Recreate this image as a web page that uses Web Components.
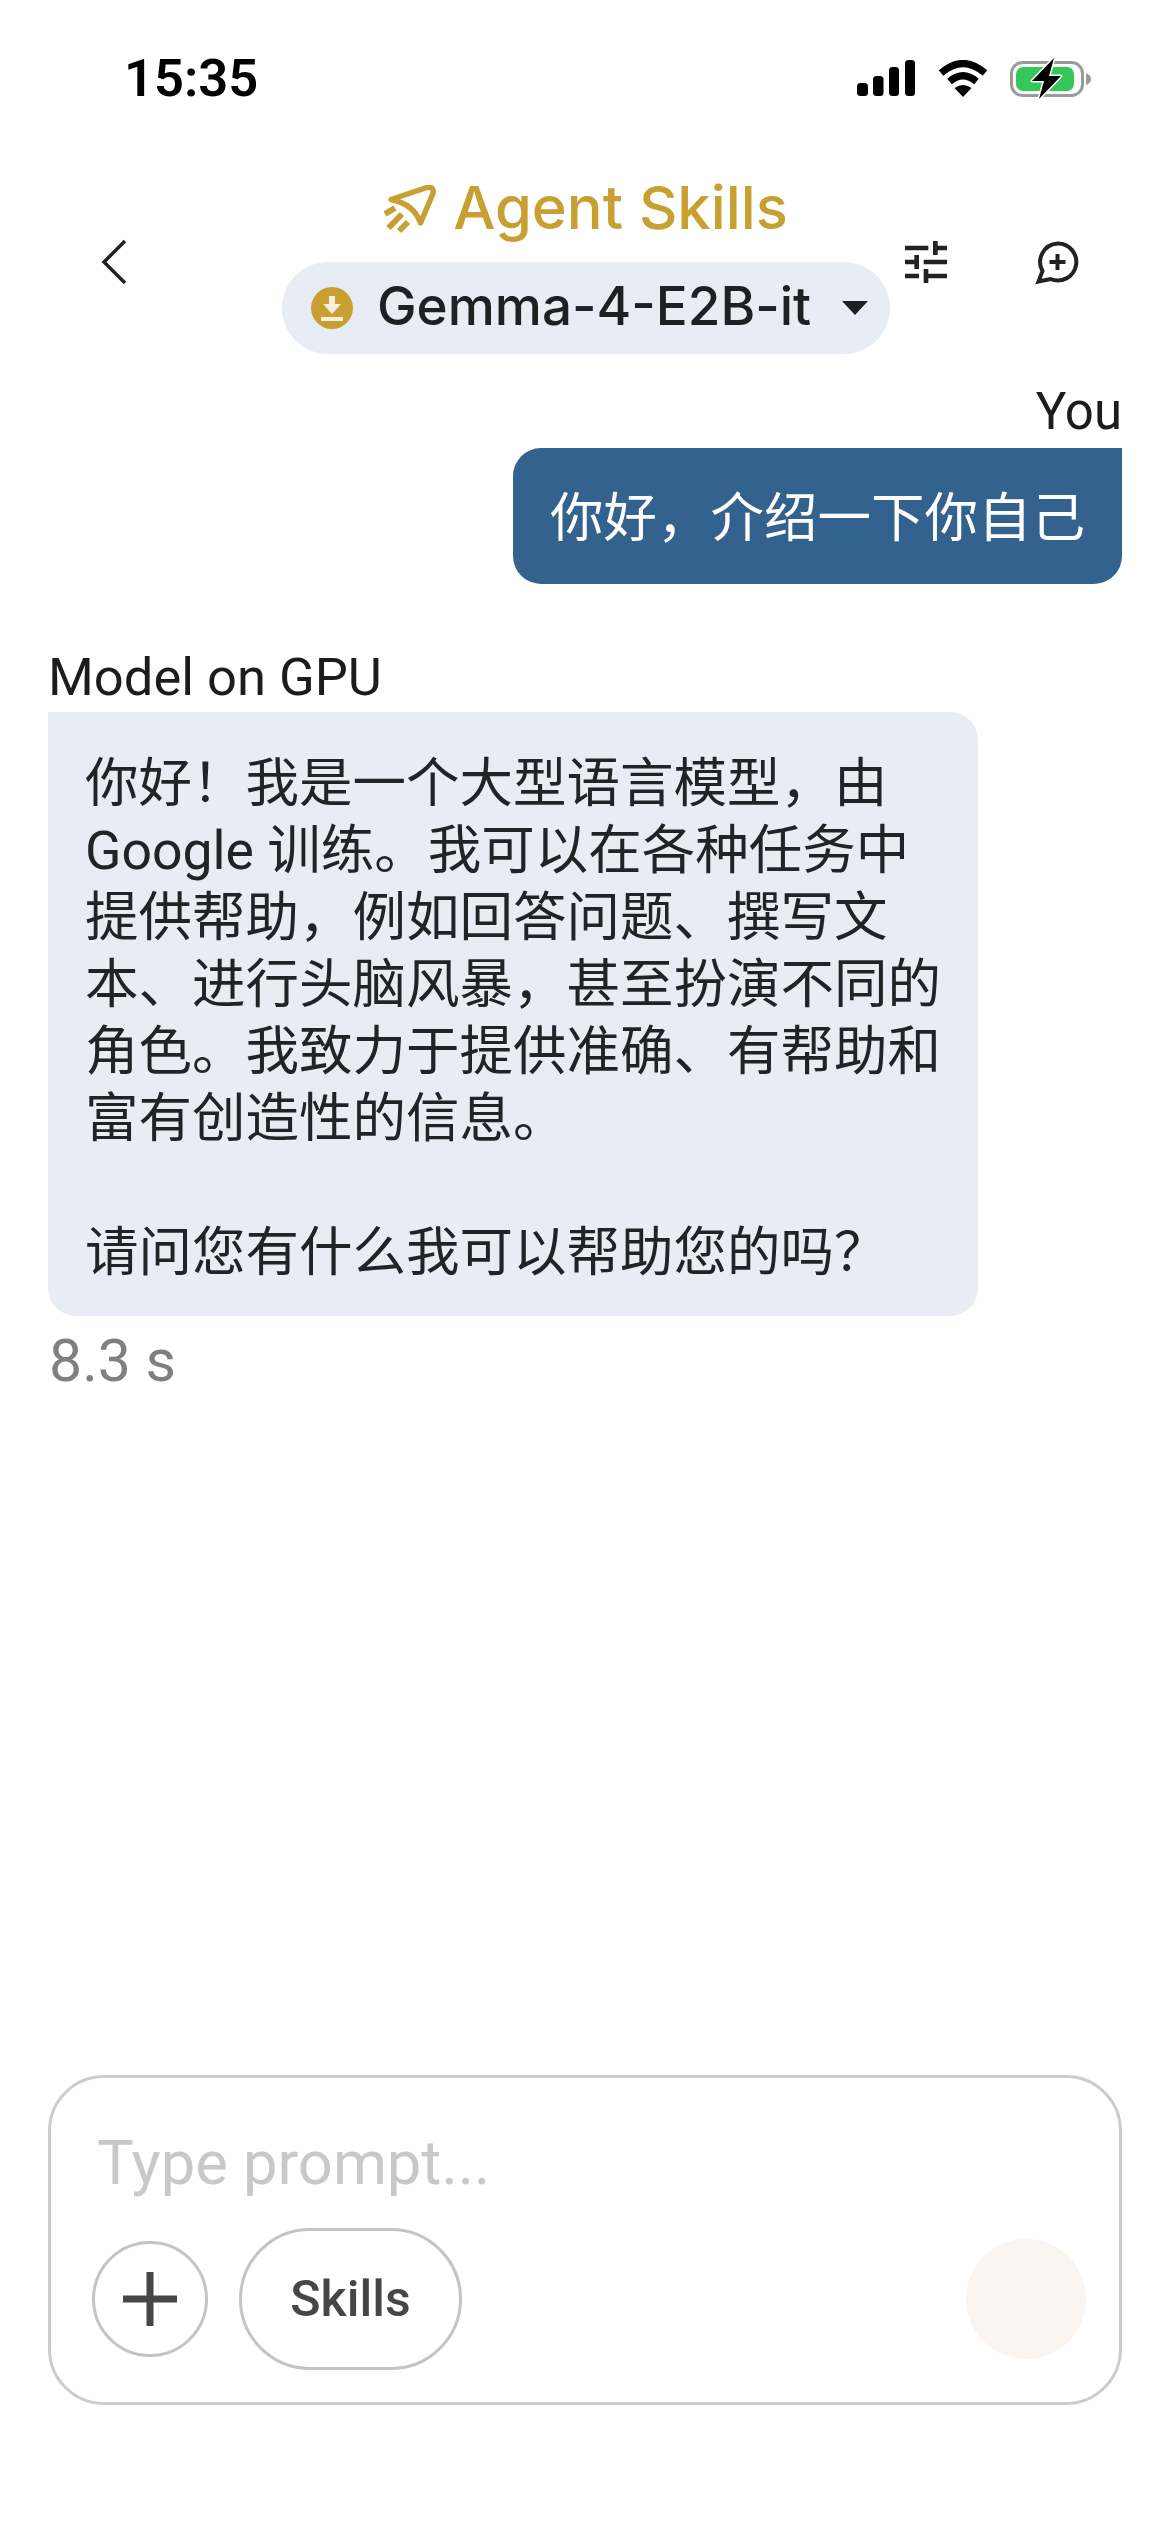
<!doctype html>
<html lang="zh">
<head>
<meta charset="utf-8">
<title>Agent Skills</title>
<style>
  html, body { margin: 0; background: #fff; }
  body { font-family: Roboto, "Noto Sans CJK SC", sans-serif; }
</style>
</head>
<body>
<app-screen>
  <status-bar time="15:35"></status-bar>
  <chat-header title-text="Agent Skills" model="Gemma-4-E2B-it"></chat-header>
  <chat-message role="user" label="You">你好，介绍一下你自己</chat-message>
  <chat-message role="model" label="Model on GPU" latency="8.3 s">你好！我是一个大型语言模型，由 Google 训练。我可以在各种任务中提供帮助，例如回答问题、撰写文本、进行头脑风暴，甚至扮演不同的角色。我致力于提供准确、有帮助和富有创造性的信息。

请问您有什么我可以帮助您的吗？</chat-message>
  <prompt-box placeholder="Type prompt..."></prompt-box>
</app-screen>

<script>
  /**
   * Page frame: one column as tall as the window.
   */
  class AppScreen extends HTMLElement {
    constructor() {
      super();
      this.attachShadow({ mode: "open" });
      this.shadowRoot.innerHTML = `
        <style>
          :host {
            display: flex;
            flex-direction: column;
            width: 1170px;
            height: 2532px;
            overflow: hidden;
            background: #fff;
          }
        </style>
        <slot></slot>
      `;
    }
  }

  /**
   * iOS status bar: clock on the left, signal, wifi and battery on the right.
   */
  class StatusBar extends HTMLElement {
    constructor() {
      super();
      this.attachShadow({ mode: "open" });
    }

    connectedCallback() {
      const time = this.getAttribute("time") ?? "";
      this.shadowRoot.innerHTML = `
        <style>
          :host {
            display: flex;
            justify-content: space-between;
            align-items: center;
            box-sizing: border-box;
            height: 170px;
            padding: 0 79px 14px 124px;
          }
          .time {
            font: 600 52.500px/60px Roboto, sans-serif;
            color: #000;
          }
          .icons { display: flex; align-items: center; gap: 23px; }
          svg { display: block; }
        </style>
        <span class="time">${time}</span>
        <span class="icons">
          <svg width="58" height="36" viewBox="0 0 58 36" fill="#000">
            <rect x="0" y="23" width="11" height="13" rx="3.5"/>
            <rect x="16" y="16" width="10.5" height="20" rx="3.5"/>
            <rect x="32" y="7" width="10" height="29" rx="3.5"/>
            <rect x="48" y="0" width="10" height="36" rx="3.5"/>
          </svg>
          <svg width="50" height="37" viewBox="0 0 50 37" fill="none" stroke="#000" style="margin-right:-1px">
            <path d="M3 13Q25 -6 47 13" stroke-width="7"/>
            <path d="M11.5 21.5Q25 10 38.5 21.5" stroke-width="7"/>
            <path d="M16.5 28Q25 22 33.5 28L25 37Z" fill="#000" stroke="none"/>
          </svg>
          <svg width="81" height="43" viewBox="0 0 81 43" fill="none">
            <rect x="1.5" y="5.500" width="71" height="33" rx="11" stroke="#9a9a9a" stroke-width="3"/>
            <rect x="6" y="10" width="58" height="24" rx="7" fill="#34c759"/>
            <path d="M76 16Q81 18 81 22Q81 26 76 28Z" fill="#9a9a9a"/>
            <path d="M44 1L22 24H34L29 42L51 19H39Z" fill="#000" stroke="#fff" stroke-width="3" stroke-linejoin="round" paint-order="stroke"/>
          </svg>
        </span>
      `;
    }
  }

  /**
   * Top bar with the back arrow, the title over the model chip, and two actions.
   */
  class ChatHeader extends HTMLElement {
    constructor() {
      super();
      this.attachShadow({ mode: "open" });
    }

    connectedCallback() {
      const title = this.getAttribute("title-text") ?? "";
      const model = this.getAttribute("model") ?? "";
      this.shadowRoot.innerHTML = `
        <style>
          :host {
            display: grid;
            grid-template-columns: 282px 608px 1fr;
            align-items: center;
            height: 184px;
          }
          svg { display: block; }
          .back { padding-left: 96px; }
          .center { display: flex; flex-direction: column; align-items: center; }
          .title {
            display: flex;
            align-items: center;
            gap: 15px;
            height: 92px;
            font: 500 59.600px/72px Inter, Roboto, sans-serif;
            color: #c8a032;
            white-space: nowrap;
          }
          .title span { position: relative; top: -9px; }
          .title svg { position: relative; top: -4px; }
          .chip {
            display: flex;
            align-items: center;
            box-sizing: border-box;
            width: 608px;
            height: 92px;
            padding: 0 22px 0 29px;
            border-radius: 46px;
            background: #e8ecf5;
            font: 500 53px/60px Inter, Roboto, sans-serif;
            color: #1f2023;
          }
          .name { flex: 1; margin-left: 24px; white-space: nowrap; position: relative; top: -2px; }
          .actions { display: flex; gap: 74px; padding-left: 8px; }
        </style>
        <div class="back">
          <svg width="34" height="48" viewBox="0 0 34 48" fill="none" stroke="#222" stroke-width="3.5">
            <path d="M29 3L8 24L29 45"/>
          </svg>
        </div>
        <div class="center">
          <div class="title">
            <svg width="54" height="54" viewBox="0 0 54 54" fill="none" stroke="#c8a032" stroke-width="5.5" stroke-linejoin="round">
              <path d="M7 14.5L43 2.5Q50 1 49 8.5L36.5 38Q30 19 7 14.5Z"/>
              <path d="M1 29L11 23M4.5 43L18 29M15 46L24 37" stroke-width="6"/>
            </svg>
            <span>${title}</span>
          </div>
          <div class="chip">
            <svg width="42" height="42" viewBox="0 0 42 42">
              <circle cx="21" cy="21" r="21" fill="#c8a032"/>
              <path d="M18 9H24V17H30L21 27L12 17H18Z" fill="#f6efd9"/>
              <rect x="10" y="30" width="22" height="4" fill="#f6efd9"/>
            </svg>
            <span class="name">${model}</span>
            <svg width="26" height="14" viewBox="0 0 26 14" fill="#1f2023">
              <path d="M0 0H26L13 14Z"/>
            </svg>
          </div>
        </div>
        <div class="actions">
          <svg width="56" height="56" viewBox="0 0 24 24" fill="#222">
            <path d="M3 17v2h6v-2H3zM3 5v2h10V5H3zm10 16v-2h8v-2h-8v-2h-2v6h2zM7 9v2H3v2h4v2h2V9H7zm14 4v-2H11v2h10zm-6-4h2V7h4V5h-4V3h-2v6z"/>
          </svg>
          <svg width="56" height="56" viewBox="0 0 56 56" fill="none" stroke="#222" stroke-width="4">
            <path d="M29.5 9.500A18.500 18.500 0 1 1 22.500 45L10.500 47.500L14.500 37A18.500 18.500 0 0 1 29.500 9.500Z"/>
            <path d="M29.500 20V36M21.500 28H37.500"/>
          </svg>
        </div>
      `;
    }
  }

  /**
   * One chat turn: small label, coloured bubble, optional latency line.
   */
  class ChatMessage extends HTMLElement {
    constructor() {
      super();
      this.attachShadow({ mode: "open" });
    }

    connectedCallback() {
      const label = this.getAttribute("label") ?? "";
      const latency = this.getAttribute("latency");
      this.shadowRoot.innerHTML = `
        <style>
          :host {
            display: flex;
            flex-direction: column;
            padding: 0 48px;
            font-family: Roboto, "Noto Sans CJK SC", sans-serif;
          }
          :host([role="user"]) { align-items: flex-end; margin-top: 28px; }
          :host([role="model"]) { align-items: flex-start; margin-top: 62px; }
          .label {
            font-size: 52.500px;
            line-height: 60px;
            margin-bottom: 6px;
            color: #1c1c1e;
          }
          :host([role="user"]) .label { font-size: 51px; }
          :host([role="model"]) .label { line-height: 62px; margin-bottom: 4px; }
          .bubble {
            box-sizing: border-box;
            font-size: 53.500px;
            line-height: 67px;
            white-space: pre-wrap;
          }
          :host([role="user"]) .bubble {
            padding: 37px 37px 32px;
            border-radius: 28px 0 28px 28px;
            background: #34628f;
            color: #fff;
          }
          :host([role="model"]) .bubble {
            width: 930px;
            padding: 38px 37px 30px;
            border-radius: 0 28px 28px 28px;
            background: #e8ecf5;
            color: #222326;
          }
          .latency {
            margin-top: 12px;
            margin-left: 1px;
            font-size: 59px;
            line-height: 66px;
            color: #808080;
          }
        </style>
        <div class="label">${label}</div>
        <div class="bubble"><slot></slot></div>
        ${latency ? `<div class="latency">${latency}</div>` : ""}
      `;
    }
  }

  /**
   * Prompt input card at the bottom of the page.
   */
  class PromptBox extends HTMLElement {
    constructor() {
      super();
      this.attachShadow({ mode: "open" });
    }

    connectedCallback() {
      const placeholder = this.getAttribute("placeholder") ?? "";
      this.shadowRoot.innerHTML = `
        <style>
          :host {
            display: block;
            box-sizing: border-box;
            width: 1074px;
            height: 330px;
            margin: auto 48px 127px;
            padding: 50px 33px 32px 41px;
            border: 3px solid #cccccc;
            border-radius: 56px;
            font-family: Roboto, sans-serif;
          }
          .placeholder {
            height: 70px;
            padding-left: 5px;
            font-size: 61.500px;
            line-height: 70px;
            color: #c8c8c8;
          }
          .row { display: flex; align-items: center; gap: 31px; margin-top: 30px; height: 142px; }
          .plus, .skills { box-sizing: border-box; border: 3px solid #c4c4c4; }
          .plus {
            display: grid;
            place-items: center;
            width: 116px;
            height: 116px;
            border-radius: 50%;
          }
          svg { display: block; }
          .skills {
            display: grid;
            place-items: center;
            width: 223px;
            height: 142px;
            border-radius: 71px;
            font-size: 50px;
            font-weight: 500;
            color: #444746;
          }
          .send {
            width: 120px;
            height: 120px;
            margin-left: auto;
            border-radius: 50%;
            background: #faf6ef;
          }
        </style>
        <div class="placeholder">${placeholder}</div>
        <div class="row">
          <div class="plus">
            <svg width="54" height="54" viewBox="0 0 54 54" stroke="#444746" stroke-width="7">
              <path d="M27 0V54M0 27H54"/>
            </svg>
          </div>
          <div class="skills">Skills</div>
          <div class="send"></div>
        </div>
      `;
    }
  }

  customElements.define("app-screen", AppScreen);
  customElements.define("status-bar", StatusBar);
  customElements.define("chat-header", ChatHeader);
  customElements.define("chat-message", ChatMessage);
  customElements.define("prompt-box", PromptBox);
</script>
</body>
</html>
